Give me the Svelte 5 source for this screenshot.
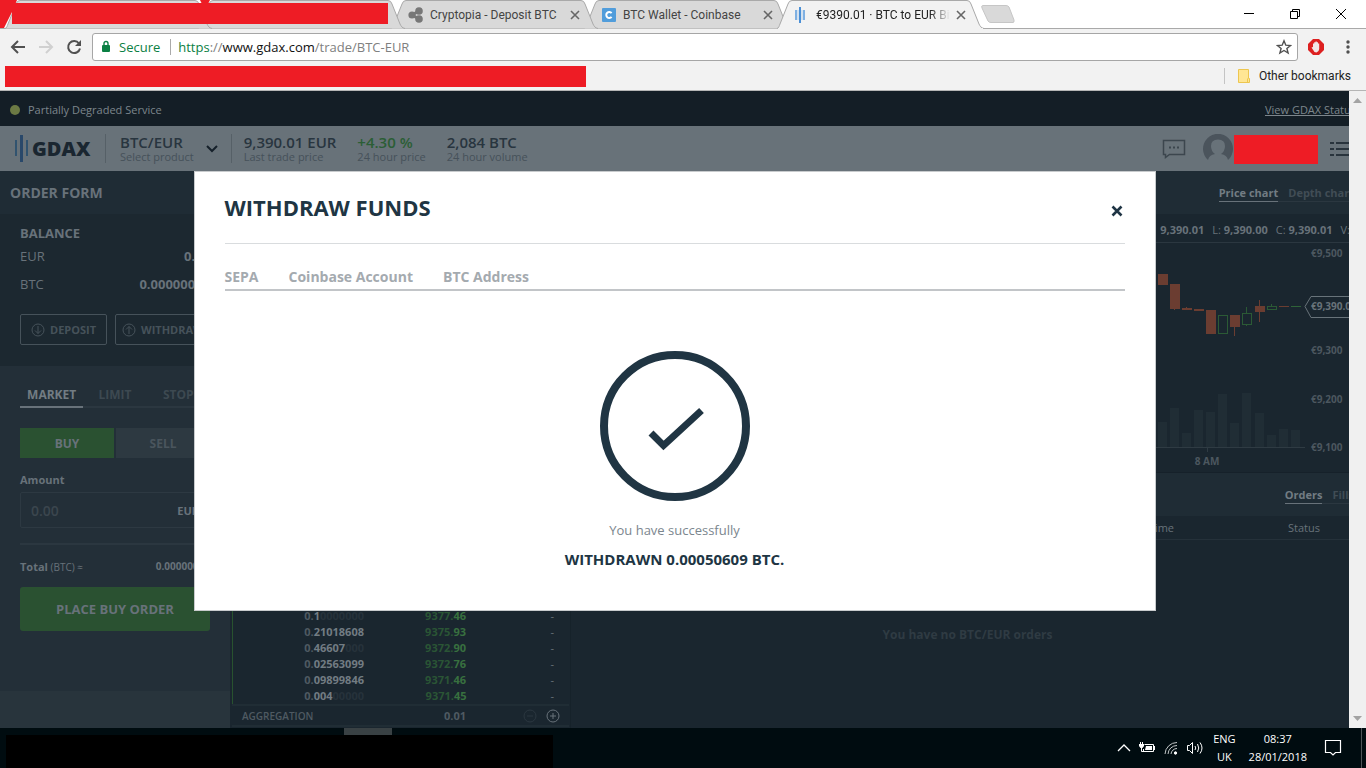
<script lang="ts">
    let side = $state("BUY");
    let orderType = $state("MARKET");
    let amount = $state("");
    let modalOpen = $state(true);

    const modalTabs = ["SEPA", "Coinbase Account", "BTC Address"];

    const stats = [
        { value: "9,390.01 EUR", label: "Last trade price" },
        { value: "+4.30 %", label: "24 hour price", up: true },
        { value: "2,084 BTC", label: "24 hour volume" },
    ];

    // size is split into leading zero, significant digits and padding zeros
    const bids = [
        { size: ["0.", "1", "0000000"], price: ["9377.", "46"] },
        { size: ["0.", "21018608", ""], price: ["9375.", "93"] },
        { size: ["0.", "46607", "000"], price: ["9372.", "90"] },
        { size: ["0.", "02563099", ""], price: ["9372.", "76"] },
        { size: ["0.", "09899846", ""], price: ["9371.", "46"] },
        { size: ["0.", "004", "00000"], price: ["9371.", "45"] },
    ];

    // body top/bottom, wick top/bottom, volume top
    const candles = [
        { x: 9, top: 31, bottom: 42, high: 31, low: 42, vol: 179, up: false },
        { x: 21, top: 41, bottom: 66, high: 41, low: 67, vol: 165, up: false },
        { x: 33, top: 65, bottom: 67, high: 64, low: 67, vol: 190, up: false },
        { x: 45, top: 66, bottom: 68, high: 66, low: 68, vol: 167, up: false },
        { x: 57, top: 67, bottom: 91, high: 67, low: 91, vol: 169, up: false },
        { x: 69, top: 72, bottom: 91, high: 72, low: 91, vol: 151, up: true },
        { x: 81, top: 72, bottom: 84, high: 72, low: 93, vol: 180, up: false },
        { x: 93, top: 70, bottom: 82, high: 64, low: 83, vol: 150, up: true },
        { x: 106, top: 63, bottom: 69, high: 57, low: 79, vol: 170, up: false },
        { x: 118, top: 63, bottom: 67, high: 61, low: 67, vol: 192, up: true },
        { x: 130, top: 63, bottom: 64, high: 63, low: 64, vol: 186, up: false },
        { x: 142, top: 63, bottom: 64, high: 63, low: 64, vol: 187, up: true },
    ];

    const axis = [
        { label: "€9,500", y: 14 },
        { label: "€9,300", y: 111 },
        { label: "€9,200", y: 160 },
        { label: "€9,100", y: 208 },
    ];
</script>

{#snippet tabShape(active)}
    <svg class="shape" width="207" height="29" viewBox="0 0 207 29" aria-hidden="true">
        <path
            d="M0 28.5 C2 28 2 26 3 24 L11 4 Q12 .5 15 .5 H190 Q193 .5 194 4 L202 24 C203 26 204 28 207 28.5"
            fill={active ? "#f2f2f2" : "#d9d9d9"}
            stroke="#a9a9a9"
        />
        {#if active}
            <path d="M1 28.5H206" stroke="#f2f2f2" />
        {/if}
    </svg>
{/snippet}

{#snippet cross()}
    <svg width="10" height="10" viewBox="0 0 10 10" aria-hidden="true">
        <path d="M1 1L9 9M9 1L1 9" stroke="currentColor" stroke-width="1.6" />
    </svg>
{/snippet}

<div class="desktop">
    <header class="chrome">
        <div class="tab-strip">
            <div class="tab">{@render tabShape(false)}</div>
            <div class="tab second">{@render tabShape(false)}</div>
            <div class="tab third">
                {@render tabShape(false)}
                <svg class="favicon" width="16" height="16" viewBox="0 0 16 16">
                    <path d="M4 8L11 4M4 8L11 12" stroke="#777" stroke-width="3" />
                    <circle cx="4" cy="8" r="3.6" fill="#777" />
                    <circle cx="11" cy="4" r="3.8" fill="#777" />
                    <circle cx="11" cy="12" r="3.8" fill="#777" />
                </svg>
                <span class="tab-title">Cryptopia - Deposit BTC</span>
                <button class="tab-close" aria-label="Close tab">{@render cross()}</button>
            </div>
            <div class="tab fourth">
                {@render tabShape(false)}
                <svg class="favicon" width="16" height="16" viewBox="0 0 16 16">
                    <rect x="1" y="1" width="14" height="14" rx="1" fill="#519ddb" />
                    <path d="M10.6 6.1A3 3 0 1 0 10.6 9.9" fill="none" stroke="#fff" stroke-width="2" />
                </svg>
                <span class="tab-title">BTC Wallet - Coinbase</span>
                <button class="tab-close" aria-label="Close tab">{@render cross()}</button>
            </div>
            <div class="tab active">
                {@render tabShape(true)}
                <svg class="favicon" width="16" height="16" viewBox="0 0 16 16">
                    <path d="M2 3V13M10 3V13" stroke="#7fb0e2" stroke-width="2" />
                    <path d="M6 0V16" stroke="#4a8fd6" stroke-width="2" />
                    <path d="M4 3V13M8 3V13" stroke="#b4d0ec" />
                </svg>
                <span class="tab-title faded">€9390.01 · BTC to EUR Bit</span>
                <button class="tab-close" aria-label="Close tab">{@render cross()}</button>
            </div>
            <button class="new-tab" aria-label="New tab">
                <svg width="36" height="19" viewBox="0 0 36 19">
                    <path d="M3 .5H26Q28 .5 29 2L34 15Q34.500 17.500 33 17.500H11Q9 17.500 8 16L2 3Q1 .5 3 .5Z" fill="#d9d9d9" stroke="#c6c6c6" />
                </svg>
            </button>
            <div class="window-buttons">
                <button aria-label="Minimise">
                    <svg width="12" height="12" viewBox="0 0 12 12"><path d="M1 5.500H11" stroke="#000" /></svg>
                </button>
                <button aria-label="Restore">
                    <svg width="12" height="12" viewBox="0 0 12 12" fill="none" stroke="#000">
                        <path d="M1.500 3.500H8.500V10.500H1.500ZM3.500 3.500V1.500H10.500V8.500H8.500" />
                    </svg>
                </button>
                <button aria-label="Close window">
                    <svg width="12" height="12" viewBox="0 0 12 12"><path d="M1 1L11 11M11 1L1 11" stroke="#000" /></svg>
                </button>
            </div>
            <svg class="redacted-tabs" width="390" height="29" viewBox="0 0 390 29" aria-hidden="true">
                <path d="M0 0H17L12 12L4 28H0ZM12 3H388V24H12ZM200 0H210L208 4H202Z" fill="#ee1c25" />
            </svg>
        </div>

        <div class="toolbar">
            <button aria-label="Back">
                <svg width="16" height="16" viewBox="0 0 16 16" fill="none" stroke="#505050" stroke-width="2">
                    <path d="M15 8H2M8 2L2 8L8 14" />
                </svg>
            </button>
            <button aria-label="Forward" disabled>
                <svg width="16" height="16" viewBox="0 0 16 16" fill="none" stroke="#d0d0d0" stroke-width="2">
                    <path d="M1 8H14M8 2L14 8L8 14" />
                </svg>
            </button>
            <button aria-label="Reload">
                <svg width="16" height="16" viewBox="0 0 16 16">
                    <path d="M13 4.500A6 6 0 1 0 14 9.500" fill="none" stroke="#505050" stroke-width="2" />
                    <path d="M15 1V7H9Z" fill="#505050" />
                </svg>
            </button>
            <div class="omnibox">
                <svg width="10" height="14" viewBox="0 0 10 14">
                    <rect x="1" y="5" width="8" height="7" rx="1" fill="#0b8043" />
                    <path d="M3 6V3.500A2 2 0 0 1 7 3.500V6" fill="none" stroke="#0b8043" stroke-width="1.400" />
                </svg>
                <span class="secure">Secure</span>
                <div class="url" role="textbox" tabindex="0" aria-label="Address"><span class="scheme">https</span>://<span class="host">www.gdax.com</span>/trade/BTC-EUR</div>
                <button aria-label="Bookmark this page">
                    <svg width="16" height="16" viewBox="0 0 16 16">
                        <path d="M8 1.800L9.800 6.200L14.500 6.500L10.900 9.500L12.100 14L8 11.500L3.900 14L5.100 9.500L1.500 6.500L6.200 6.200Z" fill="none" stroke="#505050" stroke-width="1.400" />
                    </svg>
                </button>
            </div>
            <button class="blocker" aria-label="Ad blocker">
                <svg width="16" height="16" viewBox="0 0 16 16">
                    <path d="M5 0H11L16 5V11L11 16H5L0 11V5Z" fill="#dd2020" />
                    <path d="M3.500 8.500L5 8V4.500H6.200V3.200H7.500V2.500H8.800V3.200H10V4.500H11.200V10Q11 13 8.500 13.500Q6 13.500 5.500 11.500Z" fill="#f2e6e6" />
                </svg>
            </button>
            <button class="menu" aria-label="Menu">
                <svg width="4" height="14" viewBox="0 0 4 14" fill="#505050">
                    <circle cx="2" cy="2" r="1.700" /><circle cx="2" cy="7" r="1.700" /><circle cx="2" cy="12" r="1.700" />
                </svg>
            </button>
        </div>

        <div class="bookmarks">
            <div class="redacted"></div>
            <a href={"#"}>
                <svg width="14" height="16" viewBox="0 0 14 16">
                    <path d="M1.500 1.500H11.500V10.500H12.500V14.500H1.500Z" fill="#ffe694" stroke="#edc64f" />
                    <path d="M10.500 14V10.500" stroke="#edc64f" />
                </svg>
                Other bookmarks
            </a>
        </div>
    </header>

    <div class="viewport">
        <div class="clip">
            <div class="page">
                <div class="status">
                    <i class="dot"></i>
                    Partially Degraded Service
                    <a href={"#"}>View GDAX Status</a>
                </div>

                <div class="market">
                    <div class="logo">
                        <svg width="14" height="27" viewBox="0 0 14 27">
                            <path d="M1 5V21M12 5V21" stroke="#31536f" stroke-width="2" />
                            <path d="M6.500 0V27" stroke="#29486a" stroke-width="3" />
                        </svg>
                        GDAX
                    </div>
                    <button class="product">
                        <span class="stat"><b>BTC/EUR</b><small>Select product</small></span>
                        <svg width="12" height="8" viewBox="0 0 12 8"><path d="M1 1L6 6L11 1" fill="none" stroke="#15202a" stroke-width="2" /></svg>
                    </button>
                    <div class="stats">
                        {#each stats as s}
                            <div class="stat"><b class:up={s.up}>{s.value}</b><small>{s.label}</small></div>
                        {/each}
                    </div>
                    <div class="account">
                        <button aria-label="Chat">
                            <svg width="24" height="20" viewBox="0 0 24 20">
                                <path d="M1.500 1.500H22.500V15.500H7.500L3.500 18.500V15.500H1.500Z" fill="none" stroke="#3c464e" stroke-width="1.500" />
                                <path d="M7 8.500H9M11 8.500H13M15 8.500H17" stroke="#3c464e" stroke-width="2" />
                            </svg>
                        </button>
                        <svg class="avatar" width="30" height="30" viewBox="0 0 30 30">
                            <path d="M5 26A15 15 0 1 1 25 26Q24 21 18 20Q22 17 22 12Q22 5.500 15 5.500Q8 5.500 8 12Q8 17 12 20Q6 21 5 26Z" fill="#4b545c" />
                        </svg>
                        <div class="redacted"></div>
                        <button class="list" aria-label="Account menu">
                            <svg width="24" height="16" viewBox="0 0 24 16">
                                <path d="M0 2H4M0 8H4M0 14H4M6 2H24M6 8H24M6 14H24" stroke="#29343d" stroke-width="2" />
                            </svg>
                        </button>
                    </div>
                </div>

                <div class="columns">
                    <aside class="order-form">
                        <h2>ORDER FORM</h2>
                        <section class="balance">
                            <h3>BALANCE</h3>
                            <p>EUR <b>0.00</b></p>
                            <p>BTC <b>0.00000000</b></p>
                            <div class="transfer">
                                <button>
                                    <svg width="14" height="14" viewBox="0 0 14 14"><circle cx="7" cy="7" r="6" /><path d="M7 3V10.500M4 7.500L7 10.500L10 7.500" /></svg>
                                    DEPOSIT
                                </button>
                                <button>
                                    <svg width="14" height="14" viewBox="0 0 14 14"><circle cx="7" cy="7" r="6" /><path d="M7 11V3.500M4 6.500L7 3.500L10 6.500" /></svg>
                                    WITHDRAW
                                </button>
                            </div>
                        </section>
                        <section class="ticket">
                            <div class="types">
                                {#each ["MARKET", "LIMIT", "STOP"] as t}
                                    <button class:selected={orderType === t} onclick={() => (orderType = t)}>{t}</button>
                                {/each}
                            </div>
                            <div class="sides">
                                {#each ["BUY", "SELL"] as s}
                                    <button class:selected={side === s} onclick={() => (side = s)}>{s}</button>
                                {/each}
                            </div>
                            <label for="amount">Amount</label>
                            <div class="amount">
                                <input id="amount" placeholder="0.00" bind:value={amount} />
                                <span>EUR</span>
                            </div>
                            <p class="total"><span><b>Total</b> (BTC) ≈</span> <b>0.00000000</b></p>
                            <button class="place">PLACE {side} ORDER</button>
                        </section>
                    </aside>

                    <section class="book">
                        <table>
                            <tbody>
                                {#each bids as bid}
                                    <tr>
                                        <td class="size">{bid.size[0]}<b>{bid.size[1]}</b><i>{bid.size[2]}</i></td>
                                        <td class="price">{bid.price[0]}<b>{bid.price[1]}</b></td>
                                        <td class="mine">-</td>
                                    </tr>
                                {/each}
                            </tbody>
                        </table>
                        <div class="aggregation">
                            <span>AGGREGATION</span>
                            <b>0.01</b>
                            <button class="off" aria-label="Decrease aggregation">
                                <svg width="14" height="14" viewBox="0 0 14 14"><circle cx="7" cy="7" r="6" /><path d="M4 7H10" /></svg>
                            </button>
                            <button aria-label="Increase aggregation">
                                <svg width="14" height="14" viewBox="0 0 14 14"><circle cx="7" cy="7" r="6" /><path d="M4 7H10M7 4V10" /></svg>
                            </button>
                        </div>
                    </section>

                    <section class="right">
                        <nav class="panel-tabs">
                            <a class="selected" href={"#"}>Price chart</a>
                            <a href={"#"}>Depth chart</a>
                        </nav>
                        <div class="ohlc">
                            <b>9,390.01</b>
                            <span>L: <b>9,390.00</b></span>
                            <span>C: <b>9,390.01</b></span>
                            <span>V:</span>
                        </div>
                        <div class="chart">
                            <svg width="215" height="229" viewBox="0 0 215 229">
                                {#each candles as c}
                                    <rect x={c.x} y={c.vol} width="9" height={204 - c.vol} fill="#202d35" />
                                    <path d="M{c.x + 4}.500 {c.high}V{c.low}" stroke={c.up ? "#2b5a35" : "#6b3d31"} />
                                    {#if c.bottom - c.top < 2}
                                        <rect x={c.x} y={c.top} width="10" height="1" fill={c.up ? "#2f6338" : "#6b3d31"} />
                                    {:else if c.up}
                                        <rect x={c.x + 0.5} y={c.top + 0.5} width="9" height={c.bottom - c.top - 1} fill="#1a262f" stroke="#2b5a35" />
                                    {:else}
                                        <rect x={c.x} y={c.top} width="10" height={c.bottom - c.top} fill="#6b3d31" />
                                    {/if}
                                {/each}
                                <path d="M0 204.500H156M58.500 204V209" stroke="#2f3b43" />
                                <text x="58" y="222" text-anchor="middle">8 AM</text>
                                {#each axis as a}
                                    <text x="162" y={a.y}>{a.label}</text>
                                {/each}
                                <path d="M216 53.500H162L156 63.500L162 74.500H216" fill="none" stroke="#68737a" />
                                <text class="last" x="162" y="67">€9,390.01</text>
                            </svg>
                        </div>
                        <nav class="panel-tabs">
                            <a class="selected" href={"#"}>Orders</a>
                            <a href={"#"}>Fills</a>
                        </nav>
                        <table class="orders">
                            <thead><tr><th>Time</th><th class="state">Status</th></tr></thead>
                        </table>
                        <p class="empty">You have no BTC/EUR orders</p>
                    </section>
                </div>
            </div>
        </div>
        <div class="scrollbar">
            <svg width="9" height="5" viewBox="0 0 9 5"><path d="M0 5L4.500 0L9 5Z" fill="#a3a3a3" /></svg>
            <svg width="9" height="5" viewBox="0 0 9 5"><path d="M0 0L4.500 5L9 0Z" fill="#a3a3a3" /></svg>
        </div>

        {#if modalOpen}
            <div class="modal-wrap">
                <div class="modal" role="dialog" aria-modal="true" aria-labelledby="modal-title">
                    <div class="modal-head">
                        <h1 id="modal-title">WITHDRAW FUNDS</h1>
                        <button aria-label="Close" onclick={() => (modalOpen = false)}>
                            <svg width="12" height="12" viewBox="0 0 12 12"><path d="M1.500 1.500L10.500 10.500M10.500 1.500L1.500 10.500" stroke="#1f3444" stroke-width="2.600" /></svg>
                        </button>
                    </div>
                    <div class="modal-tabs">
                        {#each modalTabs as t}
                            <button>{t}</button>
                        {/each}
                    </div>
                    <div class="done">
                        <svg width="150" height="150" viewBox="0 0 150 150" fill="none" stroke="#203543">
                            <circle cx="75" cy="75" r="71" stroke-width="8" />
                            <path d="M51 82L63.500 94.500L101.500 59.500" stroke-width="7" />
                        </svg>
                        <p>You have successfully</p>
                        <strong>WITHDRAWN 0.00050609 BTC.</strong>
                    </div>
                </div>
            </div>
        {/if}
    </div>

    <footer class="taskbar">
        <div class="apps">
            <div class="running"></div>
            <div class="blackout"></div>
        </div>
        <div class="tray">
            <svg width="14" height="8" viewBox="0 0 14 8"><path d="M1 7L7 1L13 7" fill="none" stroke="#fff" stroke-width="1.300" /></svg>
            <svg width="17" height="14" viewBox="0 0 17 14">
                <path d="M5.500 3.500H14.500V10.500H4.500V8" fill="none" stroke="#fff" />
                <path d="M7 5H13V9H6ZM15 5H16V9H15ZM0 3H5V5L3.500 7H1.500L0 5ZM1 1H2V3H1ZM3 1H4V3H3Z" fill="#fff" />
                <path d="M2.500 7V10.500H5" fill="none" stroke="#fff" />
            </svg>
            <svg width="14" height="14" viewBox="0 0 14 14" fill="none" stroke="#fff">
                <path d="M1 13A12 12 0 0 1 13 1.500M4 13A9 9 0 0 1 13 4.500M7 13A6 6 0 0 1 13 7.500" stroke="#c4c8c9" />
                <circle cx="11.500" cy="12" r="1.200" fill="#fff" />
            </svg>
            <svg width="18" height="14" viewBox="0 0 18 14" fill="none" stroke="#fff">
                <path d="M1.500 4.500H3.500L6.500 1.500V12.500L3.500 9.500H1.500Z" />
                <path d="M9 5Q10.500 7 9 9M11.500 3Q14 7 11.500 11M14 1.500Q18 7 14 12.500" />
            </svg>
            <div class="lang">ENG<br />UK</div>
            <div class="clock">08:37<br />28/01/2018</div>
            <svg width="18" height="18" viewBox="0 0 18 18"><path d="M1.500 1.500H16.500V13.500H11.500L9 16L6.500 13.500H1.500Z" fill="none" stroke="#fff" stroke-width="1.200" /></svg>
        </div>
    </footer>
</div>

<style>
    :global(body) {
        background: #1a262f;
    }
    .desktop {
        min-height: 100vh;
        display: flex;
        flex-direction: column;
        overflow: hidden;
        font-family: "Open Sans", "Noto Sans", sans-serif;
        font-size: 12px;
    }
    button {
        padding: 0;
        border: 0;
        background: none;
        font: inherit;
        color: inherit;
        display: flex;
        align-items: center;
        justify-content: center;
    }
    svg {
        display: block;
        flex: none;
    }
    h1,
    h2,
    h3,
    p {
        margin: 0;
    }
    a {
        color: inherit;
        text-decoration: none;
    }
    b {
        font-weight: 700;
    }
    .redacted {
        background: #ee1c25;
    }

    /* browser */
    .chrome {
        background: #f2f2f2;
        border-bottom: 1px solid #b5b5b5;
    }
    .tab-strip {
        position: relative;
        display: flex;
        height: 29px;
        padding-left: 5px;
        background: #fff;
        box-shadow: inset 0 -1px #a9a9a9;
    }
    .tab {
        position: relative;
        z-index: 5;
        flex: none;
        width: 207px;
        margin-right: -14px;
        box-sizing: border-box;
        padding: 0 18px 0 17px;
        display: flex;
        align-items: center;
        gap: 6px;
        color: #444;
    }
    .tab.second {
        z-index: 4;
    }
    .tab.third {
        z-index: 3;
    }
    .tab.fourth {
        z-index: 2;
    }
    .tab.active {
        z-index: 6;
        color: #222;
    }
    .shape {
        position: absolute;
        inset: 0;
        z-index: -1;
    }
    .tab-title {
        flex: 1;
        overflow: hidden;
        white-space: nowrap;
        font-family: Roboto, "Open Sans", sans-serif;
    }
    .faded {
        mask-image: linear-gradient(to right, #000 85%, transparent);
    }
    .tab-close {
        color: #666;
    }
    .new-tab {
        margin-left: 10px;
    }
    .window-buttons {
        margin-left: auto;
        display: flex;
        gap: 34px;
        padding: 0 19px 2px 0;
    }
    .redacted-tabs {
        position: absolute;
        left: 0;
        top: 0;
        z-index: 7;
    }
    .toolbar {
        display: flex;
        align-items: center;
        gap: 12px;
        height: 36px;
        padding: 0 16px 0 10px;
    }
    .omnibox {
        flex: 1;
        display: flex;
        align-items: center;
        height: 26px;
        padding: 0 5px 0 8px;
        border: 1px solid #a6a6a6;
        border-radius: 3px;
        background: #fff;
        font-size: 13px;
        margin-left: -2px;
    }
    .secure {
        margin-left: 8px;
        padding-right: 10px;
        border-right: 1px solid #aaa;
        line-height: 16px;
        color: #0b8043;
    }
    .url {
        flex: 1;
        padding-left: 7px;
        color: #808080;
    }
    .scheme {
        color: #0b8043;
    }
    .host {
        color: #111;
    }
    .toolbar .blocker {
        margin-left: -2px;
    }
    .toolbar .menu {
        margin-left: 10px;
    }
    .bookmarks {
        display: flex;
        justify-content: space-between;
        align-items: center;
        height: 25px;
        padding: 0 15px 0 5px;
    }
    .bookmarks .redacted {
        width: 581px;
        height: 21px;
        margin-bottom: 2px;
    }
    .bookmarks a {
        display: flex;
        align-items: center;
        gap: 8px;
        height: 16px;
        padding-left: 12px;
        margin-bottom: 3px;
        border-left: 1px solid #c4c4c4;
        font-family: Roboto, "Open Sans", sans-serif;
        color: #222;
    }

    .viewport {
        position: relative;
        flex: 1;
        display: flex;
    }
    .clip {
        flex: 1;
        min-width: 0;
        display: flex;
        overflow: hidden;
    }
    /* the trading page is slightly wider than its window */
    .page {
        flex: none;
        width: calc(100% + 15px);
        display: flex;
        flex-direction: column;
        background: #1a262f;
        color: #68727a;
    }
    .scrollbar {
        flex: none;
        width: 17px;
        display: flex;
        flex-direction: column;
        justify-content: space-between;
        align-items: center;
        padding: 7px 0;
        box-sizing: border-box;
        background: #f0f0f0;
    }
    .status {
        display: flex;
        align-items: center;
        gap: 8px;
        height: 35px;
        padding: 2px 8px 0 10px;
        box-sizing: border-box;
        background: #141e26;
        font-size: 11px;
        color: #7d868c;
    }
    .status a {
        margin-left: auto;
        text-decoration: underline;
    }
    .dot {
        width: 10px;
        height: 10px;
        border-radius: 50%;
        background: #6c7a44;
    }
    .market {
        display: flex;
        align-items: center;
        height: 45px;
        background: #687279;
        color: #28353f;
    }
    .logo {
        display: flex;
        align-items: center;
        gap: 3px;
        width: 90px;
        padding-left: 15px;
        box-sizing: border-box;
        font-size: 20px;
        font-weight: 800;
        color: #1a2630;
    }
    .product {
        gap: 12px;
        margin-left: 15px;
        padding: 0 13px 0 14px;
        border: solid #566067;
        border-width: 0 1px;
        text-align: left;
    }
    .stat b,
    .stat small {
        display: block;
        white-space: nowrap;
    }
    .stat b {
        font-size: 15px;
        font-weight: 600;
        line-height: 16px;
    }
    .stat small {
        font-size: 11px;
        line-height: 13px;
        color: #46515a;
    }
    .stat .up {
        color: #2b5e35;
    }
    .stats {
        display: flex;
        gap: 21px;
        padding-left: 12px;
    }
    .account {
        margin-left: auto;
        display: flex;
        align-items: center;
        padding-right: 10px;
    }
    .avatar {
        margin-left: 17px;
    }
    .account .redacted {
        width: 84px;
        height: 29px;
        margin: 2px 0 0 1px;
    }
    .account .list {
        margin-left: 12px;
    }

    .columns {
        flex: 1;
        display: flex;
    }
    .order-form {
        flex: none;
        width: 230px;
        background: #28343c;
    }
    h2 {
        height: 43px;
        padding-left: 10px;
        background: #1f2c35;
        font-size: 14px;
        font-weight: 700;
        line-height: 44px;
    }
    .balance {
        height: 152px;
        padding: 5px 20px 0;
        box-sizing: border-box;
        background: #1c2830;
        font-size: 13px;
    }
    h3 {
        font-size: 13px;
        font-weight: 700;
        line-height: 28px;
        height: 23px;
    }
    .balance p {
        display: flex;
        justify-content: space-between;
        line-height: 28px;
    }
    .transfer {
        display: flex;
        gap: 8px;
        margin-top: 16px;
    }
    .transfer button {
        flex: none;
        gap: 5px;
        height: 31px;
        padding: 0 10px;
        border: 1px solid #46525a;
        border-radius: 2px;
        font-size: 11px;
        font-weight: 700;
        color: #46525a;
    }
    .transfer button + button {
        padding: 0 6px;
    }
    .transfer svg,
    .aggregation svg {
        fill: none;
        stroke: currentColor;
    }
    .ticket {
        height: 325px;
        padding: 16px 20px 0;
        box-sizing: border-box;
        background: #232f38;
    }
    .types {
        display: grid;
        grid-template-columns: repeat(3, 1fr);
    }
    .types button {
        height: 26px;
        border-bottom: 2px solid #2b3740;
        font-weight: 700;
        color: #3d4951;
    }
    .types .selected {
        border-color: #68727a;
        color: #727c83;
    }
    .sides {
        display: grid;
        grid-template-columns: 1fr 1fr;
        gap: 2px;
        margin: 20px 0 14px;
    }
    .sides button {
        height: 30px;
        background: #2d3941;
        font-weight: 700;
        color: #4a555d;
    }
    .sides .selected {
        background: #2a5131;
        color: #68727a;
    }
    label {
        display: block;
        font-size: 11px;
        font-weight: 700;
        line-height: 16px;
    }
    .amount {
        display: flex;
        align-items: center;
        height: 34px;
        margin: 4px 0 15px;
        padding: 0 10px;
        border: 1px solid #2d3942;
        border-radius: 2px;
        font-size: 11px;
        font-weight: 700;
    }
    input {
        flex: 1;
        min-width: 0;
        padding: 0;
        border: 0;
        background: none;
        outline: none;
        font: 600 14px "Open Sans", sans-serif;
        color: #68727a;
    }
    input::placeholder {
        color: #3b464e;
    }
    .total {
        display: flex;
        justify-content: space-between;
        align-items: center;
        border-top: 2px solid #2b3740;
        height: 42px;
        font-size: 10px;
    }
    .total span b {
        font-size: 11px;
    }
    .place {
        width: 100%;
        height: 44px;
        border-radius: 3px;
        background: #2a5131;
        font-weight: 700;
        font-size: 13px;
    }

    .book {
        flex: none;
        width: 341px;
        display: flex;
        flex-direction: column;
        justify-content: flex-end;
        box-sizing: border-box;
        padding: 0 1px 1px 2px;
        border-right: 1px solid #16222a;
    }
    .book table {
        width: 100%;
        table-layout: fixed;
        border-collapse: collapse;
        border-left: 1px solid #28522f;
        font-size: 11px;
        line-height: 16px;
        text-align: right;
    }
    .book td {
        padding: 0;
    }
    .size {
        width: 131px;
        font-weight: 700;
        color: #4f5a62;
    }
    .size b {
        color: #727c83;
    }
    .size i {
        font-style: normal;
        color: #26323b;
    }
    .price {
        width: 102px;
        font-weight: 700;
        color: #2a5535;
    }
    .price b {
        color: #38703f;
    }
    .book .mine {
        padding-right: 15px;
    }
    .aggregation {
        display: flex;
        align-items: center;
        height: 19px;
        padding: 0 9px 0 10px;
        border: solid #202d35;
        border-width: 2px 0;
        background: #1a262f;
        font-size: 10px;
        font-weight: 600;
        color: #4f5a62;
    }
    .aggregation b {
        margin-left: auto;
        margin-right: 57px;
        font-size: 11px;
    }
    .aggregation button + button {
        margin-left: 9px;
        color: #68727a;
    }
    .off {
        color: #2b3740;
    }

    .right {
        flex: 1;
        min-width: 0;
    }
    .panel-tabs {
        display: flex;
        justify-content: flex-end;
        align-items: center;
        height: 43px;
        padding-right: 10px;
        background: #1f2c35;
        font-weight: 700;
        font-size: 11px;
    }
    .panel-tabs a {
        padding-left: 10px;
        line-height: 17px;
        color: #414d55;
        border-bottom: 1px solid #2b3740;
    }
    .panel-tabs .selected {
        padding-left: 0;
        border-color: #68727a;
        color: #727c83;
    }
    .ohlc {
        display: flex;
        justify-content: flex-end;
        gap: 8px;
        padding-right: 14px;
        border-bottom: 1px solid #2b3740;
        font-size: 11px;
        line-height: 32px;
        height: 28px;
    }
    .chart {
        display: flex;
        justify-content: flex-end;
        border-bottom: 1px solid #16212a;
    }
    .chart text {
        font-size: 10px;
        font-weight: 700;
        fill: #4c575f;
    }
    .chart .last {
        fill: #68737a;
    }
    .orders {
        width: 100%;
        border-collapse: collapse;
        border-bottom: 1px solid #25313a;
        font-size: 11px;
        text-align: right;
    }
    .orders th {
        height: 23px;
        padding: 0;
        font-weight: 400;
        text-align: right;
    }
    .orders .state {
        width: 190px;
        padding-right: 44px;
        box-sizing: border-box;
    }
    .empty {
        padding-top: 86px;
        text-align: center;
        font-size: 12px;
        font-weight: 700;
        color: #2f3b43;
    }

    /* withdraw dialog */
    .modal-wrap {
        position: absolute;
        inset: 80px 17px auto 0;
        display: flex;
        justify-content: center;
    }
    .modal {
        width: 900px;
        padding: 0 30px 41px;
        border: 1px solid #c8cbcd;
        background: #fff;
        color: #203543;
    }
    .modal-head {
        display: flex;
        justify-content: space-between;
        align-items: center;
        height: 71px;
        border-bottom: 1px solid #d9dcde;
    }
    h1 {
        padding-bottom: 2px;
        font-size: 22px;
        font-weight: 700;
    }
    .modal-head button {
        margin: 6px 2px 0 0;
    }
    .modal-tabs {
        display: flex;
        gap: 30px;
        padding: 21px 0 1px;
        border-bottom: 2px solid #c2c5c8;
    }
    .modal-tabs button {
        height: 23px;
        font-size: 14px;
        font-weight: 700;
        color: #a4aaaf;
    }
    .done {
        display: flex;
        flex-direction: column;
        align-items: center;
        padding-top: 60px;
    }
    .done p {
        margin-top: 19px;
        font-size: 13px;
        line-height: 20px;
        color: #7b868e;
    }
    .done strong {
        margin-top: 9px;
        font-size: 15px;
        font-weight: 700;
        line-height: 20px;
    }

    .taskbar {
        display: flex;
        justify-content: space-between;
        height: 40px;
        background: #000c10;
        color: #fff;
    }
    .apps {
        width: 547px;
        margin-left: 6px;
        display: flex;
        flex-direction: column;
    }
    .running {
        width: 48px;
        height: 7px;
        margin-left: 338px;
        background: #394144;
    }
    .blackout {
        flex: 1;
        background: #000;
    }
    .tray {
        display: flex;
        align-items: center;
        gap: 8px;
        margin-right: 4px;
        padding-right: 19px;
        border-right: 1px solid #4d5558;
    }
    .lang,
    .clock {
        font-size: 11px;
        line-height: 18px;
        text-align: center;
    }
    .lang {
        margin-left: 1px;
    }
    .clock {
        margin: 0 9px 0 5px;
    }
</style>
